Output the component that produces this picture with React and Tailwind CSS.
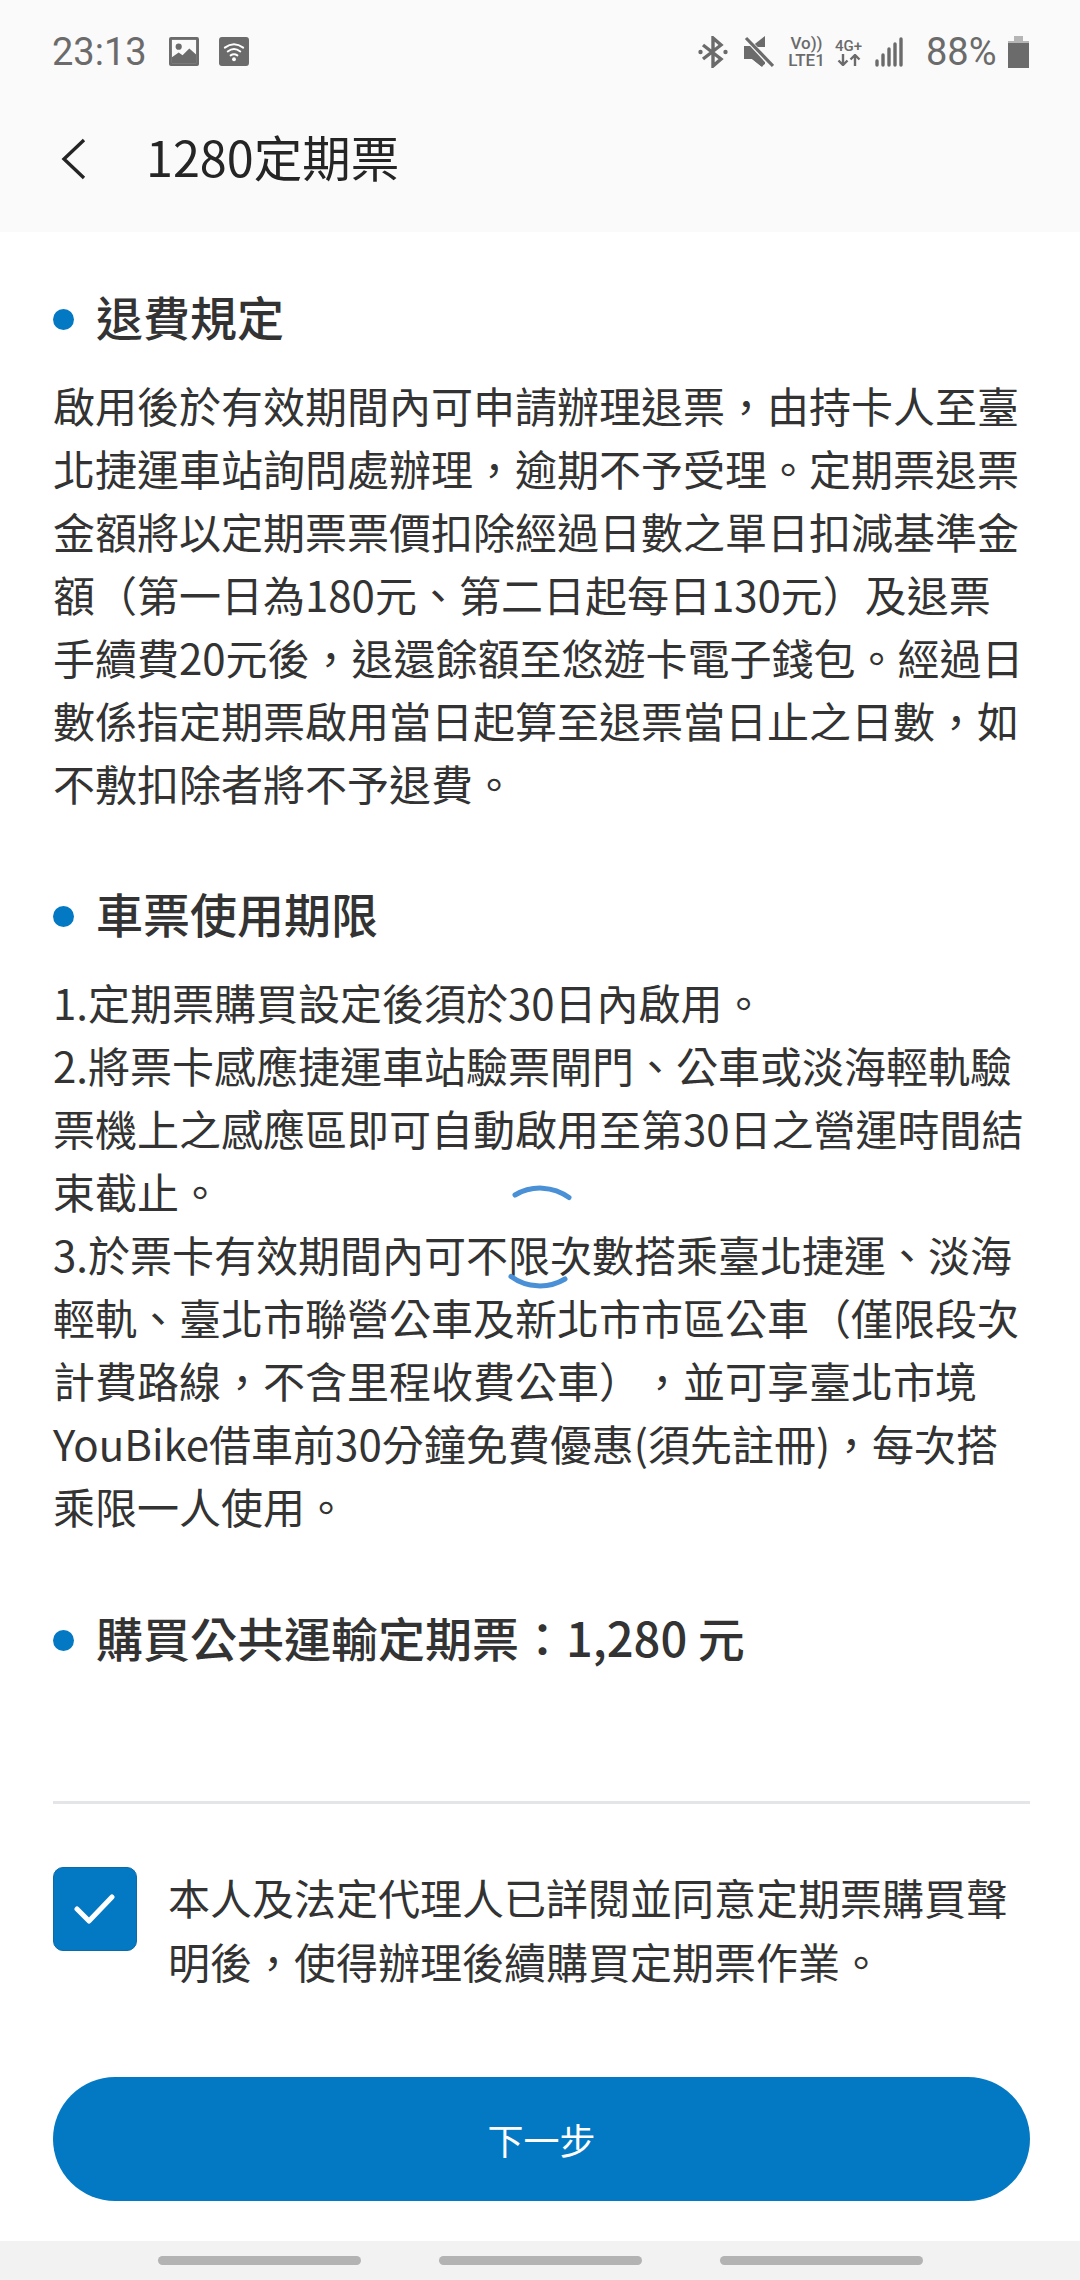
const refundText =
  "啟用後於有效期間內可申請辦理退票，由持卡人至臺北捷運車站詢問處辦理，逾期不予受理。定期票退票金額將以定期票票價扣除經過日數之單日扣減基準金額（第一日為180元、第二日起每日130元）及退票手續費20元後，退還餘額至悠遊卡電子錢包。經過日數係指定期票啟用當日起算至退票當日止之日數，如不敷扣除者將不予退費。";

const usageRules = [
  "1.定期票購買設定後須於30日內啟用。",
  "2.將票卡感應捷運車站驗票閘門、公車或淡海輕軌驗票機上之感應區即可自動啟用至第30日之營運時間結束截止。",
  "3.於票卡有效期間內可不限次數搭乘臺北捷運、淡海輕軌、臺北市聯營公車及新北市市區公車（僅限段次計費路線，不含里程收費公車），並可享臺北市境YouBike借車前30分鐘免費優惠(須先註冊)，每次搭乘限一人使用。",
];

function ImageIcon() {
  return (
    <svg width="30" height="29" viewBox="0 0 31 30">
      <rect width="31" height="30" rx="2" fill="#6b6b6b" />
      <rect x="3" y="3" width="25" height="24" fill="#fafafa" />
      <circle cx="10" cy="10" r="3.2" fill="#6b6b6b" />
      <path d="M3 24 L3 21 L10 16 L14 19 L21 12 L28 18 L28 27 L3 27Z" fill="#6b6b6b" />
    </svg>
  );
}

function WifiIcon() {
  return (
    <svg width="30" height="29" viewBox="0 0 31 30">
      <rect width="31" height="30" rx="3" fill="#6b6b6b" />
      <g fill="none" stroke="#fff" strokeWidth="2" strokeLinecap="round">
        <path d="M6 11 Q15.5 4 25 11" />
        <path d="M9 15 Q15.5 10 22 15" />
        <path d="M12 19 Q15.5 16.5 19 19" />
      </g>
      <circle cx="15.5" cy="23" r="2" fill="#fff" />
    </svg>
  );
}

function BluetoothIcon() {
  return (
    <svg width="30" height="32" viewBox="0 0 30 32">
      <path d="M5 9 L23 23 L15 30 L15 2 L23 9 L5 23" fill="none" stroke="#6b6b6b" strokeWidth="3.4" />
      <circle cx="2.5" cy="16" r="2.2" fill="#6b6b6b" />
      <circle cx="27.5" cy="16" r="2.2" fill="#6b6b6b" />
    </svg>
  );
}

function MuteIcon() {
  return (
    <svg width="30" height="32" viewBox="0 0 30 32">
      <path d="M0 11 L7 11 L21 0 L21 11 L0 11Z M0 11 L0 22 L7 22 L18 31 L21 27 Z" fill="#6b6b6b" />
      <path d="M0 10 L10 10 L21 22 L21 28 L17 30 L8 23 L0 23Z" fill="#6b6b6b" />
      <path d="M1 1 L29 31" stroke="#fafafa" strokeWidth="5" />
      <path d="M2 2 L29 30" stroke="#6b6b6b" strokeWidth="3.2" />
    </svg>
  );
}

function TransferArrows() {
  return (
    <svg width="24" height="12" viewBox="0 0 24 12" fill="none" stroke="#6b6b6b" strokeWidth="2.4">
      <path d="M6 0 L6 11 M1.5 6.5 L6 11 L10.5 6.5" />
      <path d="M18 12 L18 1 M13.5 5.5 L18 1 L22.5 5.5" />
    </svg>
  );
}

function SignalIcon() {
  return (
    <svg width="28" height="30" viewBox="0 0 28 30" stroke="#6b6b6b" strokeWidth="3.4" strokeLinecap="round">
      <path d="M2 28 L2 24" />
      <path d="M8 28 L8 18" />
      <path d="M14 28 L14 12" />
      <path d="M20 28 L20 7" />
      <path d="M26 28 L26 2" />
    </svg>
  );
}

function BatteryIcon() {
  return (
    <svg width="21" height="32" viewBox="0 0 21 32">
      <rect x="6" y="0" width="9" height="5" fill="#b5b5b5" />
      <rect x="0" y="5" width="21" height="27" fill="#6b6b6b" />
      <rect x="0" y="5" width="21" height="2" fill="#b5b5b5" />
    </svg>
  );
}

function StatusBar() {
  return (
    <div className="flex h-[104px] items-center justify-between pl-[52px] pr-[51px] pb-[1px] font-['Roboto',sans-serif] text-[38px] text-[#6b6b6b]">
      <div className="flex items-center">
        <span className="w-[117px] leading-none">23:13</span>
        <ImageIcon />
        <span className="ml-[20px]">
          <WifiIcon />
        </span>
      </div>
      <div className="flex items-center">
        <BluetoothIcon />
        <span className="ml-[16px]">
          <MuteIcon />
        </span>
        <div className="ml-[13px] flex w-[39px] flex-col items-center text-[17px] font-medium leading-[17px]">
          <span>Vo))</span>
          <span>LTE1</span>
        </div>
        <div className="ml-[7px] flex w-[31px] flex-col items-center text-[15px] font-medium leading-[16px]">
          <span>4G+</span>
          <TransferArrows />
        </div>
        <span className="ml-[11px]">
          <SignalIcon />
        </span>
        <span className="ml-[23px] w-[82px] leading-none">88%</span>
        <BatteryIcon />
      </div>
    </div>
  );
}

function SectionTitle({ children }) {
  return (
    <h2 className="flex h-[63px] items-center text-[47px] font-medium text-[#333333]">
      <span className="mr-[22px] mt-[6px] h-[21px] w-[21px] rounded-full bg-[#0479c3]" />
      {children}
    </h2>
  );
}

function Spinner() {
  return (
    <svg className="absolute left-[480px] top-[1177px]" width="120" height="120" viewBox="0 0 120 120" fill="none" stroke="#4a90d6" strokeWidth="5" strokeLinecap="round">
      <path d="M35 18 A49 49 0 0 1 89 20.5" />
      <path d="M31 99.5 A49 49 0 0 0 85 102" />
    </svg>
  );
}

export default function App() {
  return (
    <div className="relative flex h-[2280px] w-[1080px] flex-col bg-white font-['Noto_Sans_CJK_TC',sans-serif] text-[#333333] [text-spacing-trim:space-all]">
      <header className="h-[232px] bg-[#fafafa]">
        <StatusBar />
        <div className="flex h-[112px] items-center pl-[60px] pb-[2px]">
          <svg width="26" height="42" viewBox="0 0 26 42" fill="none" stroke="#252525" strokeWidth="3.4">
            <path d="M24 2 L4 21 L24 40" />
          </svg>
          <h1 className="mb-[6px] ml-[60px] text-[48.5px] text-[#252525]">1280定期票</h1>
        </div>
      </header>

      <main className="flex flex-1 flex-col pl-[53px] pr-[50px] pt-[53px]">
        <SectionTitle>退費規定</SectionTitle>
        <p className="mt-[25px] text-[42px] leading-[63px]">{refundText}</p>

        <div className="mt-[68px]">
          <SectionTitle>車票使用期限</SectionTitle>
        </div>
        <div className="mt-[25px] text-[42px] leading-[63px]">
          {usageRules.map((rule) => (
            <p key={rule}>{rule}</p>
          ))}
        </div>

        <div className="mt-[69px]">
          <SectionTitle>購買公共運輸定期票：1,280 元</SectionTitle>
        </div>

        <div className="mt-[132px] h-[3px] bg-[#e3e5e8]" />

        <div className="mt-[63px] flex">
          <div className="flex h-[84px] w-[84px] shrink-0 items-center justify-center rounded-[10px] border border-[#0b6aa8] bg-[#0479c3]">
            <svg width="42" height="32" viewBox="0 0 42 32" fill="none" stroke="#fff" strokeWidth="5" strokeLinecap="round" strokeLinejoin="round">
              <path d="M3 16 L15 28 L38 4" />
            </svg>
          </div>
          <p className="-mt-[2px] ml-[31px] text-[42px] leading-[64px]">
            本人及法定代理人已詳閱並同意定期票購買聲明後，使得辦理後續購買定期票作業。
          </p>
        </div>

        <button className="mt-[84px] h-[124px] rounded-full bg-[#0479c3] text-[36px] text-white">下一步</button>
      </main>

      <footer className="flex h-[39px] justify-center gap-[78px] bg-[#f2f2f2] pt-[15px]">
        <span className="h-[9px] w-[203px] rounded-full bg-[#b3b3b3]" />
        <span className="h-[9px] w-[203px] rounded-full bg-[#b3b3b3]" />
        <span className="h-[9px] w-[203px] rounded-full bg-[#b3b3b3]" />
      </footer>

      <Spinner />
    </div>
  );
}
